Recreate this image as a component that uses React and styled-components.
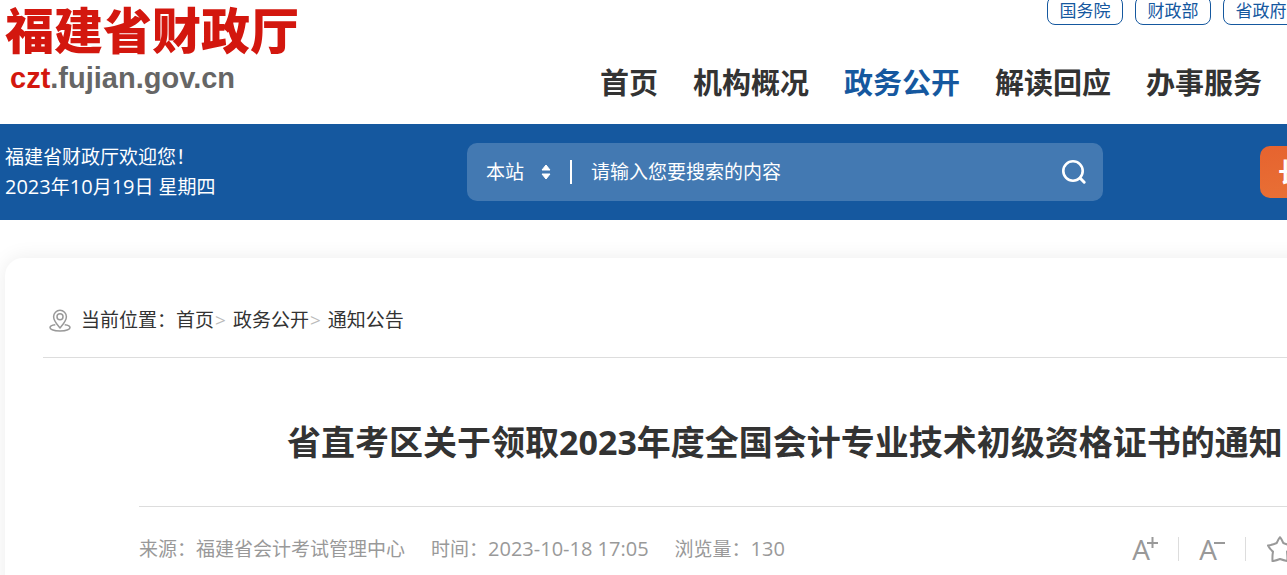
import React from 'react';
import styled, { createGlobalStyle } from 'styled-components';

const quickLinks = ['国务院', '财政部', '省政府'];

const navItems = [
  { label: '首页' },
  { label: '机构概况' },
  { label: '政务公开', active: true },
  { label: '解读回应' },
  { label: '办事服务' },
];

const App = () => {
  return (
    <>
      <GlobalStyle />
      <PageStyle>
        <HeaderStyle>
          <LogoStyle href='#home'>
            <strong>福建省财政厅</strong>
            <span>
              <em>czt</em>.fujian.gov.cn
            </span>
          </LogoStyle>
          <MenuStyle>
            <QuickLinksStyle>
              {quickLinks.map((name) => (
                <a href='#site' key={name}>
                  {name}
                </a>
              ))}
            </QuickLinksStyle>
            <NavStyle>
              {navItems.map(({ label, active }) => (
                <NavLinkStyle href='#nav' key={label} $active={active}>
                  {label}
                </NavLinkStyle>
              ))}
            </NavStyle>
          </MenuStyle>
        </HeaderStyle>

        <BannerStyle>
          <BannerInnerStyle>
            <WelcomeStyle>
              <p>福建省财政厅欢迎您！</p>
              <p>
                <NumberStyle>2023</NumberStyle>年<NumberStyle>10</NumberStyle>月
                <NumberStyle>19</NumberStyle>日 星期四
              </p>
            </WelcomeStyle>
            <SearchStyle role='search' onSubmit={(e) => e.preventDefault()}>
              <ScopeStyle>
                <select aria-label='搜索范围'>
                  <option>本站</option>
                </select>
                <svg width='10' height='16' viewBox='0 0 10 16'>
                  <path
                    d='M5 1 9 6H1ZM5 15 1 10H9Z'
                    fill='#fff'
                    stroke='#fff'
                    strokeLinejoin='round'
                  />
                </svg>
              </ScopeStyle>
              <input
                type='text'
                aria-label='搜索内容'
                placeholder='请输入您要搜索的内容'
              />
              <button type='submit' aria-label='搜索'>
                <svg width='26' height='26' viewBox='0 0 26 26' fill='none'>
                  <circle cx='12' cy='12' r='9.7' stroke='#fff' strokeWidth='2.6' />
                  <path
                    d='m19 19 4.2 4.2'
                    stroke='#fff'
                    strokeWidth='3'
                    strokeLinecap='round'
                  />
                </svg>
              </button>
            </SearchStyle>
            <CareButtonStyle type='button'>长者助手</CareButtonStyle>
          </BannerInnerStyle>
        </BannerStyle>

        <CardStyle>
          <BreadcrumbStyle aria-label='当前位置'>
            <svg
              width='22'
              height='24'
              viewBox='0 0 22 24'
              fill='none'
              stroke='#999'
              strokeWidth='1.5'
              strokeLinejoin='round'>
              <path d='M11 19C9 16.5 4.6 12 4.6 7.7a6.4 6.4 0 0 1 12.8 0C17.4 12 13 16.5 11 19Z' />
              <circle cx='11' cy='7.8' r='3' />
              <path d='M6.3 15.7C3 16.1 1 17.1 1 18.6c0 2 4.4 3.4 10 3.4s10-1.4 10-3.4c0-1.5-2-2.5-5.3-2.9' />
            </svg>
            <span>当前位置：</span>
            <a href='#home'>首页</a>
            <i>&gt;</i>
            <a href='#open'>政务公开</a>
            <i>&gt;</i>
            <a href='#notice'>通知公告</a>
          </BreadcrumbStyle>

          <ArticleStyle>
            <h1>省直考区关于领取2023年度全国会计专业技术初级资格证书的通知</h1>
            <MetaStyle>
              <span>来源：福建省会计考试管理中心</span>
              <span>
                时间：<NumberStyle>2023-10-18 17:05</NumberStyle>
              </span>
              <span>
                浏览量：<NumberStyle>130</NumberStyle>
              </span>
              <ToolsStyle>
                <ToolStyle type='button' aria-label='放大字体'>
                  A
                  <SignStyle width='11' height='12' viewBox='0 0 11 12'>
                    <path d='M0 6h11M5.5 0v11' />
                  </SignStyle>
                </ToolStyle>
                <ToolStyle type='button' aria-label='缩小字体'>
                  A
                  <SignStyle width='11' height='12' viewBox='0 0 11 12'>
                    <path d='M0 6h11' />
                  </SignStyle>
                </ToolStyle>
                <ToolStyle type='button' aria-label='收藏'>
                  <StarStyle width='26' height='26' viewBox='0 0 26 26'>
                    <path d='M13 1.2Q14.5 3 16.3 7Q20 8.7 25 9.5Q23 13.5 20 15.5Q20.5 20 20.5 25Q17 24.5 13 23Q9 24.5 5.5 25.2Q5.2 20 6 15.5Q3 13.5 1 9.5Q6 8.7 9.7 7Q11.5 3 13 1.2Z' />
                  </StarStyle>
                </ToolStyle>
              </ToolsStyle>
            </MetaStyle>
          </ArticleStyle>
        </CardStyle>
      </PageStyle>
    </>
  );
};

const GlobalStyle = createGlobalStyle`
  * {
    box-sizing: border-box;
    margin: 0;
    padding: 0;
  }
  html {
    overflow: hidden auto;
    scrollbar-width: none;
  }
  body {
    background: white;
    color: #333;
    font-family: 'Open Sans', 'Noto Sans CJK SC', sans-serif;
    font-size: 19px;
    line-height: 29px;
  }
  a {
    color: inherit;
    text-decoration: none;
  }
  button, input, select {
    border: none;
    background: none;
    color: inherit;
    font: inherit;
    outline: none;
  }
  button {
    cursor: pointer;
  }
`;

const PageStyle = styled.div`
  min-width: 1570px;
`;

const NumberStyle = styled.span`
  font-size: 20px;
`;

const HeaderStyle = styled.header`
  display: flex;
  width: 1560px;
  height: 124px;
  margin: 0 auto;
`;

const LogoStyle = styled.a`
  flex: 0 0 595px;
  display: flex;
  flex-direction: column;
  strong {
    color: #d3170e;
    font-size: 49px;
    font-weight: 900;
    line-height: 60px;
  }
  span {
    padding-left: 5px;
    color: #666;
    font-family: 'Liberation Sans', sans-serif;
    font-size: 29px;
    font-weight: bold;
    line-height: 36px;
  }
  em {
    color: #d3170e;
    font-style: normal;
  }
`;

const MenuStyle = styled.div`
  flex: 1;
`;

const QuickLinksStyle = styled.div`
  display: flex;
  gap: 12px;
  margin-top: -4px;
  padding-left: 447px;
  a {
    width: 76px;
    border: 1px solid #15589f;
    border-radius: 8px;
    color: #15589f;
    font-size: 17px;
    line-height: 27px;
    text-align: center;
  }
`;

const NavStyle = styled.nav`
  display: flex;
  gap: 35px;
  padding-top: 36px;
`;

const NavLinkStyle = styled.a`
  color: ${({ $active }) => ($active ? '#15589f' : '#333')};
  font-size: 29px;
  font-weight: bold;
  line-height: 44px;
`;

const BannerStyle = styled.div`
  background: #15589f;
  color: white;
`;

const BannerInnerStyle = styled.div`
  display: grid;
  grid-template-columns: 1fr 636px 1fr;
  align-items: center;
  width: 1560px;
  height: 96px;
  margin: 0 auto;
`;

const WelcomeStyle = styled.div`
  white-space: nowrap;
`;

const SearchStyle = styled.form`
  display: flex;
  align-items: center;
  height: 58px;
  padding: 0 16px 0 19px;
  border-radius: 10px;
  background: rgba(255, 255, 255, 0.2);
  input {
    flex: 1;
    height: 24px;
    padding-left: 19px;
    border-left: 2px solid white;
    line-height: 24px;
  }
  input::placeholder {
    color: white;
    opacity: 1;
  }
  button {
    display: flex;
  }
`;

const ScopeStyle = styled.label`
  display: flex;
  align-items: center;
  gap: 16px;
  padding-right: 19px;
  select {
    appearance: none;
  }
  option {
    color: #333;
  }
`;

const CareButtonStyle = styled.button`
  justify-self: end;
  width: 305px;
  height: 52px;
  padding-left: 18px;
  border-radius: 10px;
  background: linear-gradient(170deg, #e6632f, #ea7a3a);
  font-size: 26px;
  font-weight: bold;
  text-align: left;
`;

const CardStyle = styled.main`
  width: 1560px;
  margin: 38px auto 0;
  padding: 38px;
  border-radius: 18px;
  background: white;
  box-shadow: 0 0 20px rgba(0, 0, 0, 0.08);
`;

const BreadcrumbStyle = styled.nav`
  display: flex;
  align-items: center;
  height: 62px;
  padding: 0 6px 12px;
  border-bottom: 1px solid #ddd;
  svg {
    margin-right: 10px;
  }
  i {
    margin: 0 7px 0 1px;
    color: #bbb;
    font-style: normal;
  }
`;

const ArticleStyle = styled.article`
  padding: 59px 96px 0;
  h1 {
    padding-bottom: 39px;
    border-bottom: 1px solid #ddd;
    font-size: 34px;
    line-height: 50px;
    text-align: center;
    white-space: nowrap;
  }
`;

const MetaStyle = styled.div`
  display: flex;
  align-items: center;
  gap: 26px;
  padding-top: 27px;
  color: #999;
`;

const ToolsStyle = styled.div`
  display: flex;
  flex: 0 0 319px;
  margin-left: auto;
`;

const ToolStyle = styled.button`
  display: flex;
  justify-content: center;
  align-items: center;
  width: 67px;
  height: 24px;
  border-right: 1px solid #ddd;
  font-size: 28px;
  line-height: 24px;
  svg {
    fill: none;
    stroke: #999;
    stroke-width: 2;
  }
  &:last-child {
    border-right: none;
  }
`;

const SignStyle = styled.svg`
  align-self: flex-start;
  margin-left: -3px;
`;

const StarStyle = styled.svg`
  flex: none;
  stroke-linejoin: round;
`;

export default App;
